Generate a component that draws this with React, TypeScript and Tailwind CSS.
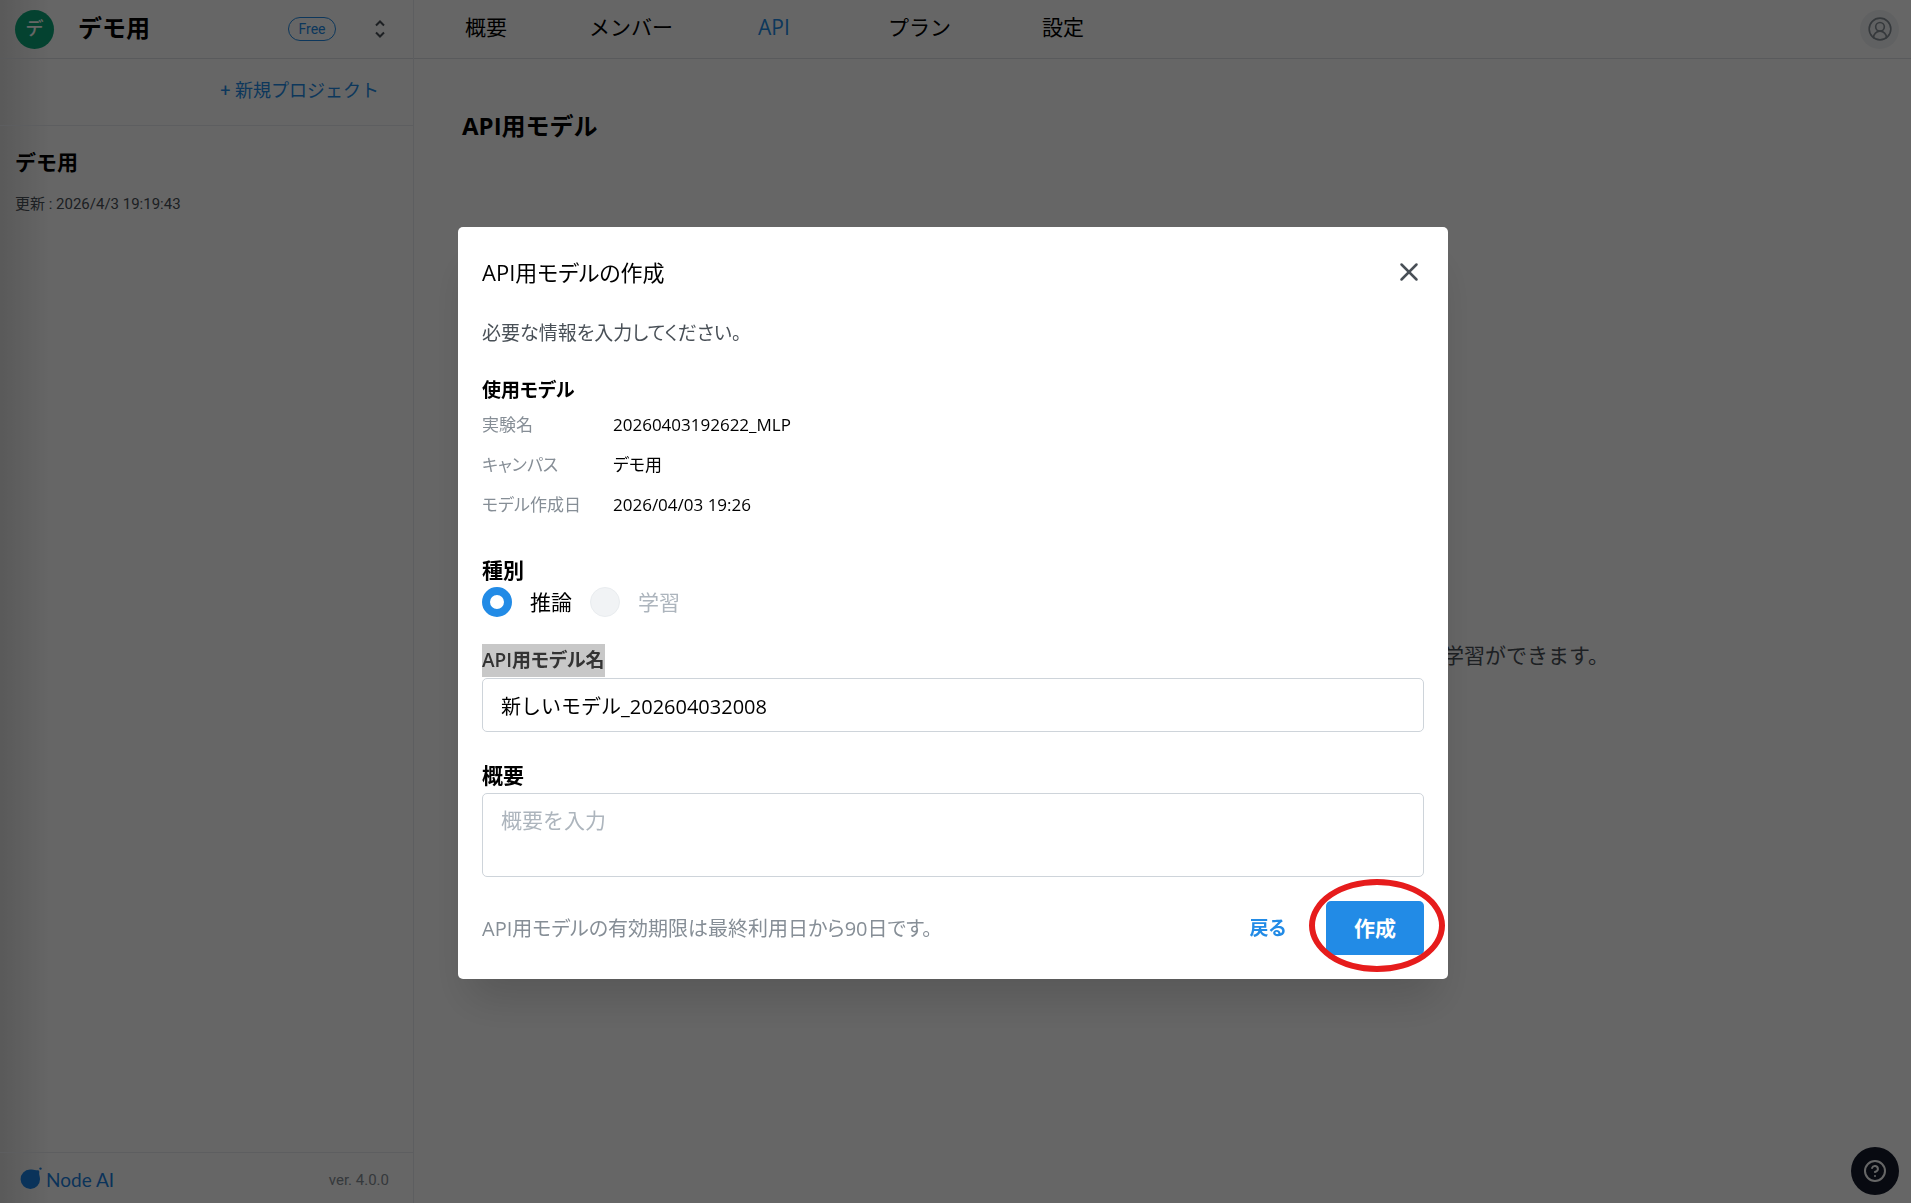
import { CircleHelp, CircleUserRound, X } from "lucide-react";

const ui = "font-['Open_Sans','Noto_Sans_CJK_JP',sans-serif]";
const tabs = [
  { label: "概要", width: "w-[124px]" },
  { label: "メンバー", width: "w-[169px]" },
  { label: "API", width: "w-[130px]", active: true },
  { label: "プラン", width: "w-[154px]" },
  { label: "設定", width: "w-[60px]" },
];
const details = [
  { name: "実験名", value: "20260403192622_MLP" },
  { name: "キャンパス", value: "デモ用" },
  { name: "モデル作成日", value: "2026/04/03 19:26" },
];

function Sidebar() {
  return (
    <aside className="flex w-[414px] shrink-0 flex-col border-r border-[#e9ecef] bg-linear-to-r from-[#e0e0e0] to-white to-[50px] font-[Roboto,'Noto_Sans_CJK_JP',sans-serif]">
      <div className="flex h-[59px] items-center border-b border-[#dee2e6] pr-[21px] pl-[15px]">
        <span className="flex size-[39px] items-center justify-center rounded-full bg-[#0ca678] text-lg font-medium text-white">デ</span>
        <h1 className="ml-6 flex-1 text-2xl leading-8 font-bold">デモ用</h1>
        <span className="flex h-6 w-12 items-center justify-center rounded-full border border-[#228be6] text-sm text-[#228be6]">Free</span>
        <button aria-label="プロジェクトを切り替え" className="ml-8 flex size-6 items-center justify-center text-[#495057]">
          <svg viewBox="0 0 24 24" className="size-6" fill="none" stroke="currentColor" strokeWidth="2">
            <path d="M8 8.5 12 4.5 16 8.5M8 15.5 12 19.5 16 15.5" />
          </svg>
        </button>
      </div>
      <div className="flex h-[67px] items-center justify-end border-b border-[#e9ecef] pr-[34px] pb-0.5">
        <button className="text-lg text-[#228be6]">+ 新規プロジェクト</button>
      </div>
      <a href="#" className="flex flex-col gap-3 px-[15px] pt-[21px]">
        <h2 className="text-[21px] leading-8 font-bold">デモ用</h2>
        <p className="text-[15px] leading-[26px] text-[#495057]">更新 : 2026/4/3 19:19:43</p>
      </a>
      <footer className="mt-auto flex h-[51px] items-center justify-between border-t border-[#e9ecef] pt-1 pr-6 pl-5">
        <a href="#" className="flex items-center gap-1 font-[Lato,sans-serif] text-[19px] text-[#1a80e0]">
          <svg viewBox="0 0 22 22" className="mb-1 size-[22px]" fill="currentColor">
            <path d="M10 2.5C13 2.5 14.5 3.4 17 3.2C19 3 19.5 4 19.2 5.8C18.9 8 20 9.5 20 12A9.7 9.7 0 1 1 10 2.5Z" />
            <circle cx="20.5" cy="1.6" r="1.2" />
          </svg>
          Node AI
        </a>
        <span className="text-[15px] text-[#868e96]">ver. 4.0.0</span>
      </footer>
    </aside>
  );
}

function Main() {
  return (
    <main className={`${ui} flex min-w-0 flex-1 flex-col`}>
      <header className="flex h-[59px] shrink-0 items-center border-b border-[#dee2e6] pr-3 pl-[51px]">
        <nav className="flex flex-1 pb-1">
          {tabs.map((t) => (
            <a key={t.label} href="#" className={`${t.width} text-[21px] leading-8 ${t.active ? "text-[#228be6]" : "text-black"}`}>{t.label}</a>
          ))}
        </nav>
        <button aria-label="アカウント" className="flex size-[39px] items-center justify-center rounded-full bg-[#f1f3f5] text-[#868e96]">
          <CircleUserRound size={26} strokeWidth={1.5} />
        </button>
      </header>
      <h2 className="px-12 pt-[51px] text-2xl leading-8 font-bold">API用モデル</h2>
      <p className="my-auto pr-[302px] pb-[36px] text-right text-[21px] leading-8 text-[#495057]">学習ができます。</p>
    </main>
  );
}

function Dialog() {
  return (
    <div className="fixed inset-0 flex items-center justify-center bg-black/60 pt-[3px] pr-[5px]">
      <form
        role="dialog"
        aria-labelledby="dialog-title"
        className={`${ui} w-full max-w-[990px] rounded-[5px] bg-white p-6 text-[21px] leading-[33px] shadow-[0_30px_40px_-10px_rgba(0,0,0,0.15)]`}
        onSubmit={(e) => e.preventDefault()}
      >
        <div className="[font-feature-settings:'palt']">
          <div className="mb-6 flex h-[42px] items-center justify-between">
            <h2 id="dialog-title" className="text-[22px]">API用モデルの作成</h2>
            <button type="button" aria-label="閉じる" className="text-[#495057]">
              <X size={30} strokeWidth={2} />
            </button>
          </div>
          <p className="mb-6 text-[19px] text-[#495057]">必要な情報を入力してください。</p>
          <h3 className="mb-1 text-[19px] font-bold">使用モデル</h3>
          <dl className="mb-[35px] grid grid-cols-[131px_1fr] gap-y-3 text-[17px] leading-7">
            {details.map((d) => (
              <div key={d.name} className="contents">
                <dt className="text-[#868e96]">{d.name}</dt>
                <dd>{d.value}</dd>
              </div>
            ))}
          </dl>
          <fieldset className="mb-[27px]">
            <legend className="font-bold">種別</legend>
            <div className="flex h-[30px] items-center gap-[18px]">
              <label className="flex items-center gap-[18px]">
                <input type="radio" name="kind" defaultChecked className="size-[30px] appearance-none rounded-full border-8 border-[#228be6] bg-white" />
                推論
              </label>
              <label className="flex items-center gap-[18px] text-[#adb5bd]">
                <input type="radio" name="kind" disabled className="size-[30px] appearance-none rounded-full border border-[#e9ecef] bg-[#f1f3f5]" />
                学習
              </label>
            </div>
          </fieldset>
          <label htmlFor="model-name" className="mb-px block w-fit bg-[#c8c8c8] text-[19px] font-semibold text-[#333]">API用モデル名</label>
        </div>
        <input id="model-name" defaultValue="新しいモデル_202604032008" className="mb-[27px] block h-[54px] w-full rounded-[5px] border border-[#ced4da] px-[18px] text-xl" />
        <label htmlFor="summary" className="mb-px block font-bold">概要</label>
        <textarea id="summary" placeholder="概要を入力" className="mb-6 block h-[84px] w-full resize-none rounded-[5px] border border-[#ced4da] px-[18px] py-[10px] placeholder:text-[#adb5bd]" />
        <div className="flex items-center">
          <p className="flex-1 text-xl leading-[33px] text-[#868e96] [font-feature-settings:'palt']">API用モデルの有効期限は最終利用日から90日です。</p>
          <button type="button" className="mr-10 text-[19px] font-semibold text-[#228be6] [font-feature-settings:'palt']">戻る</button>
          <div className="relative">
            <button type="submit" className="block h-[54px] w-[98px] rounded-[5px] bg-[#228be6] font-bold text-white">作成</button>
            <span className="pointer-events-none absolute -top-[22px] -left-[17px] h-[93px] w-[136px] rounded-[50%] border-[6px] border-[#e61c1c]" />
          </div>
        </div>
      </form>
    </div>
  );
}

export default function App() {
  return (
    <div className="flex h-screen bg-white text-black" lang="ja">
      <Sidebar />
      <Main />
      <button aria-label="ヘルプ" className="fixed right-3 bottom-2 flex size-12 items-center justify-center rounded-full bg-[#141a2c] text-white">
        <CircleHelp size={24} strokeWidth={2} />
      </button>
      <Dialog />
    </div>
  );
}
